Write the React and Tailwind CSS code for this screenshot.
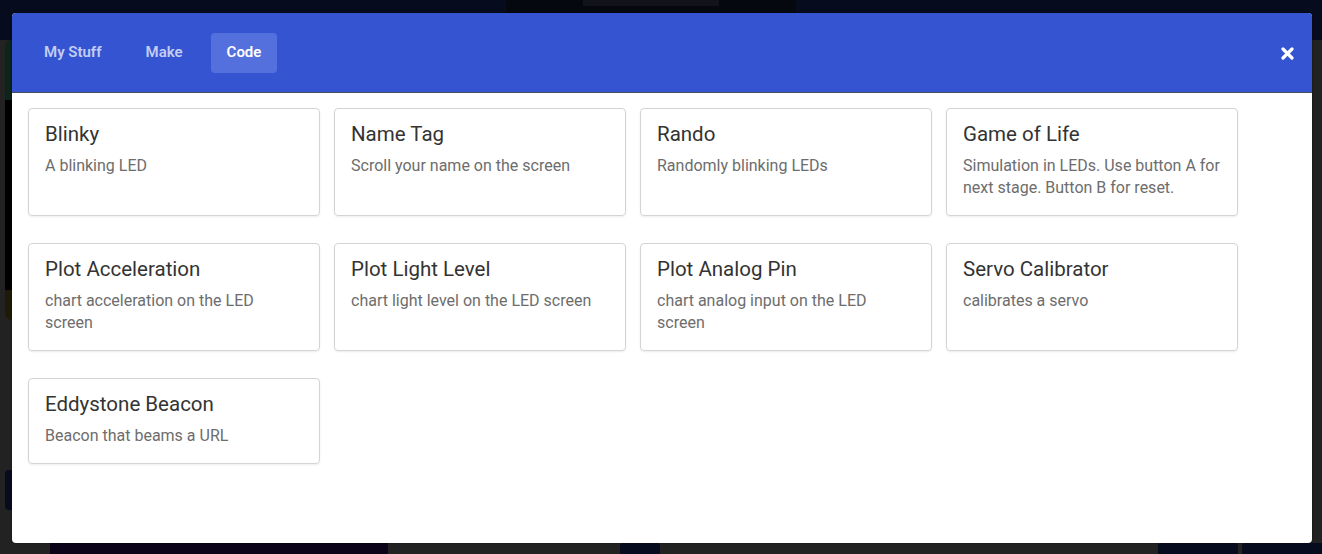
import React, { useState } from "react";

const projects = [
  { title: "Blinky", desc: "A blinking LED" },
  { title: "Name Tag", desc: "Scroll your name on the screen" },
  { title: "Rando", desc: "Randomly blinking LEDs" },
  { title: "Game of Life", desc: "Simulation in LEDs. Use button A for next stage. Button B for reset." },
  { title: "Plot Acceleration", desc: "chart acceleration on the LED screen" },
  { title: "Plot Light Level", desc: "chart light level on the LED screen" },
  { title: "Plot Analog Pin", desc: "chart analog input on the LED screen" },
  { title: "Servo Calibrator", desc: "calibrates a servo" },
  { title: "Eddystone Beacon", desc: "Beacon that beams a URL" },
];

const tabs = ["My Stuff", "Make", "Code"];

const App = () => {
  const [tab, setTab] = useState("Code");

  return (
    <div className="relative w-[1322px] h-[554px] overflow-hidden bg-[#222222]" style={{ fontFamily: "Roboto, 'Noto Sans', sans-serif" }}>
      {/* dimmed page behind the dialog */}
      <div className="h-[40px] bg-[#060b1d] flex justify-center">
        <div className="w-[290px] h-full bg-[#05080f] ml-[-20px] flex justify-center">
          <div className="w-[136px] h-[6px] bg-[#111318]" />
        </div>
      </div>
      <div className="flex">
        <div className="w-[12px] flex flex-col">
          <div className="h-[60px] ml-[5px] bg-[#0d2418] rounded-tl-[10px]" />
          <div className="h-[190px] ml-[5px] bg-[#000000]" />
          <div className="h-[30px] ml-[5px] bg-[#1e1a08] rounded-bl-[10px]" />
          <div className="h-[150px]" />
          <div className="h-[40px] ml-[5px] bg-[#070b1d] rounded-l-[4px]" />
        </div>
      </div>
      <div className="absolute left-0 bottom-0 w-full h-[11px] flex">
        <div className="w-[50px]" />
        <div className="w-[338px] bg-[#0b0418]" />
        <div className="w-[232px]" />
        <div className="w-[40px] bg-[#060b1d] rounded-t-[3px]" />
        <div className="flex-1" />
        <div className="w-[80px] bg-[#060b1d] rounded-t-[3px]" />
        <div className="w-[4px]" />
        <div className="w-[80px] bg-[#060b1d] rounded-tl-[3px]" />
      </div>

      {/* dialog */}
      <div className="absolute left-[12px] top-[13px] w-[1300px] h-[530px] bg-white rounded-[4px] overflow-hidden shadow-[0_0_2px_rgba(0,0,0,0.6)]">
        <div className="h-[80px] bg-[#3454d1] border-b border-[#4a4f60] flex items-center pl-[16px] pr-[18px]">
          <div className="flex gap-[12px]">
            {tabs.map((t) => (
              <button
                key={t}
                onClick={() => setTab(t)}
                className={`h-[40px] px-[16px] rounded-[4px] text-[15px] font-semibold ${
                  t === tab ? "bg-[#5470dc] text-white" : "text-[#c3cdf4]"
                }`}
              >
                {t}
              </button>
            ))}
          </div>
          <button className="ml-auto mt-[2px] text-white" aria-label="close">
            <svg width="13" height="13" viewBox="0 0 13 13">
              <path d="M2 2 L11 11 M11 2 L2 11" stroke="#fff" strokeWidth="3.2" strokeLinecap="round" />
            </svg>
          </button>
        </div>

        <div className="pt-[15px] pl-[16px] grid grid-cols-[repeat(4,292px)] gap-x-[14px] gap-y-[27px]">
          {projects.map((p) => (
            <div
              key={p.title}
              className="border border-[#d4d4d4] rounded-[4px] pt-[11px] pb-[16px] px-[16px] shadow-[0_1px_2px_rgba(0,0,0,0.08)]"
            >
              <div className="text-[20.5px] leading-[28px] text-[#333333]">{p.title}</div>
              <div className="mt-[7px] text-[16px] leading-[22px] text-[#6d6d6d]">{p.desc}</div>
            </div>
          ))}
        </div>
      </div>
    </div>
  );
};

export default App;
